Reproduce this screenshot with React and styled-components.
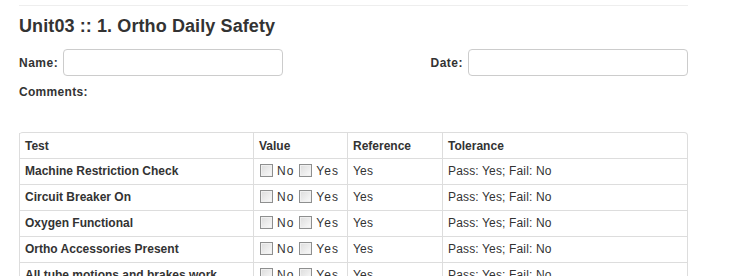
import React from "react";
import styled, { createGlobalStyle } from "styled-components";

const Global = createGlobalStyle`
  html, body { margin: 0; padding: 0; background: #fff; }
  body { font-family: "Liberation Sans", Arial, sans-serif; color: #333; font-size: 12px; }
`;

const Page = styled.div`
  width: 669px;
  margin-left: 19px;
  padding-top: 5px;
`;

const Rule = styled.div`
  border-top: 1px solid #eee;
`;

const Title = styled.h3`
  margin: 9px 0 0;
  font-size: 18px;
  line-height: 22px;
  font-weight: bold;
  letter-spacing: 0.1px;
  color: #333;
`;

const FieldRow = styled.div`
  display: flex;
  justify-content: space-between;
  margin-top: 12px;
`;

const Field = styled.div`
  display: flex;
  align-items: center;
  gap: 5px;
`;

const Label = styled.label`
  font-weight: bold;
  font-size: 12px;
  letter-spacing: 0.5px;
`;

const TextInput = styled.input`
  box-sizing: border-box;
  width: 220px;
  height: 27px;
  border: 1px solid #ccc;
  border-radius: 4px;
  background: #fff;
  margin: 0;
`;

const Comments = styled.div`
  margin-top: 9px;
  font-weight: bold;
  font-size: 12px;
  line-height: 14px;
  letter-spacing: 0.3px;
`;

const Table = styled.table`
  margin-top: 33px;
  width: 100%;
  border-collapse: separate;
  border-spacing: 0;
  border: 1px solid #ddd;
  border-left: 0;
  border-radius: 4px;
  font-size: 12px;
`;

const Th = styled.th`
  text-align: left;
  font-weight: bold;
  height: 25px;
  padding: 0 5px;
  border-left: 1px solid #ddd;
  vertical-align: middle;
  width: ${(p) => p.$w}px;
  box-sizing: border-box;
`;

const Td = styled.td`
  box-sizing: border-box;
  height: 26px;
  padding: 0 5px 2px;
  border-left: 1px solid #ddd;
  border-top: 1px solid #ddd;
  vertical-align: middle;
  font-weight: ${(p) => (p.$bold ? "bold" : "normal")};
  letter-spacing: ${(p) => (p.$bold ? "0" : "0.15px")};
  padding-left: ${(p) => p.$pl ?? 5}px;
  color: #333;
  white-space: nowrap;
`;

const Check = styled.input.attrs({ type: "checkbox" })`
  appearance: none;
  width: 13px;
  height: 13px;
  margin: 0 4px 0 0;
  box-sizing: border-box;
  border: 1px solid #8e8f8f;
  background: linear-gradient(135deg, #dcdcdc, #fafafa);
  box-shadow: inset 0 0 0 1px #f0f0f0;
  vertical-align: -2px;
`;

const Opt = styled.span`
  margin-right: ${(p) => p.$mr}px;
  letter-spacing: 1px;
`;

const rows = [
  "Machine Restriction Check",
  "Circuit Breaker On",
  "Oxygen Functional",
  "Ortho Accessories Present",
  "All tube motions and brakes work",
];

export default function App() {
  return (
    <>
      <Global />
      <Page>
        <Rule />
        <Title>Unit03 :: 1. Ortho Daily Safety</Title>
        <FieldRow>
          <Field>
            <Label>Name:</Label>
            <TextInput />
          </Field>
          <Field>
            <Label>Date:</Label>
            <TextInput />
          </Field>
        </FieldRow>
        <Comments>Comments:</Comments>
        <Table>
          <thead>
            <tr>
              <Th $w={234}>Test</Th>
              <Th $w={94}>Value</Th>
              <Th $w={95}>Reference</Th>
              <Th>Tolerance</Th>
            </tr>
          </thead>
          <tbody>
            {rows.map((r) => (
              <tr key={r}>
                <Td $bold>{r}</Td>
                <Td $pl={6}>
                  <Check />
                  <Opt $mr={5}>No</Opt>
                  <Check />
                  <Opt $mr={0}>Yes</Opt>
                </Td>
                <Td>Yes</Td>
                <Td>Pass: Yes; Fail: No</Td>
              </tr>
            ))}
          </tbody>
        </Table>
      </Page>
    </>
  );
}
